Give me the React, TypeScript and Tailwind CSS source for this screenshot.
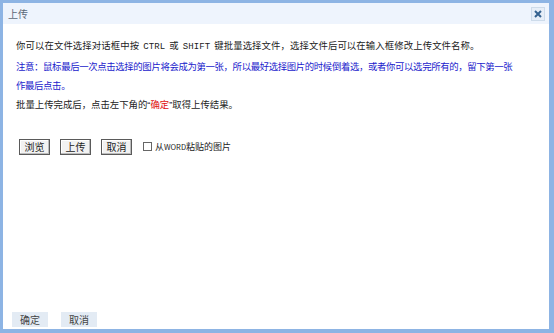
import * as React from 'react';

// --- Tombol kecil gaya lama ---
const OldButton = ({ children }: { children: React.ReactNode }) => (
  <button className="h-[16px] w-[31px] border border-[#5a5a5a] bg-[#f2f2f2] text-[10px] leading-none text-[#222] shadow-[inset_-1px_-1px_0_#bcbcbc,inset_1px_1px_0_#fff]">
    {children}
  </button>
);

const FooterButton = ({ children }: { children: React.ReactNode }) => (
  <button className="h-[15px] w-[36px] bg-[#e3ebf4] text-[10px] leading-none text-[#444]">
    {children}
  </button>
);

export default function App() {
  return (
    <div
      className="flex h-[333px] w-[554px] flex-col border-t-[3px] border-r-[5px] border-b-[4px] border-l-[3px] border-[#8db4e4] bg-white text-[9.4px] text-[#222]"
      style={{ fontFamily: '"Noto Sans CJK SC", "Liberation Sans", sans-serif' }}
    >
      {/* Title bar */}
      <div className="flex h-[21px] items-center justify-between bg-[#eef4fd] pr-[4px] pl-[5px]">
        <span className="text-[10px] text-[#5b6877]">上传</span>
        <div className="flex h-[14px] w-[14px] items-center justify-center border border-[#cddbea] bg-[#e6eef8]">
          <svg width="8" height="8" viewBox="0 0 8 8">
            <path d="M1 1 L7 7 M7 1 L1 7" stroke="#34618f" strokeWidth="2" />
          </svg>
        </div>
      </div>

      {/* Body */}
      <div className="flex-1 pt-[12px] pl-[13px] pr-[10px] leading-[19px]">
        <p className="tracking-[0.1px]">
          你可以在文件选择对话框中按
          <span className="px-[4px] font-['Liberation_Mono'] text-[9px]">CTRL</span>或
          <span className="px-[4px] font-['Liberation_Mono'] text-[9px]">SHIFT</span>
          键批量选择文件，选择文件后可以在输入框修改上传文件名称。
        </p>
        <p className="tracking-[-0.35px] text-[#1a1acc]">
          <span className="whitespace-nowrap">
            注意：鼠标最后一次点击选择的图片将会成为第一张，所以最好选择图片的时候倒着选，或者你可以选完所有的，留下第一张
          </span>
          <br />
          作最后点击。
        </p>
        <p>
          批量上传完成后，点击左下角的<span className="font-['Liberation_Sans']">“</span>
          <span className="text-[#e01010]">确定</span>
          <span className="font-['Liberation_Sans']">”</span>取得上传结果。
        </p>

        <div className="mt-[23px] flex items-center">
          <div className="ml-[3px] flex gap-[10px]">
            <OldButton>浏览</OldButton>
            <OldButton>上传</OldButton>
            <OldButton>取消</OldButton>
          </div>
          <label className="ml-[11px] flex items-center gap-[3px] text-[9px]">
            <span className="h-[9px] w-[9px] border border-[#666] bg-white" />
            <span>
              从<span className="text-[7.5px]">WORD</span>粘贴的图片
            </span>
          </label>
        </div>
      </div>

      {/* Footer */}
      <div className="flex gap-[13px] pb-[2px] pl-[9px]">
        <FooterButton>确定</FooterButton>
        <FooterButton>取消</FooterButton>
      </div>
    </div>
  );
}
